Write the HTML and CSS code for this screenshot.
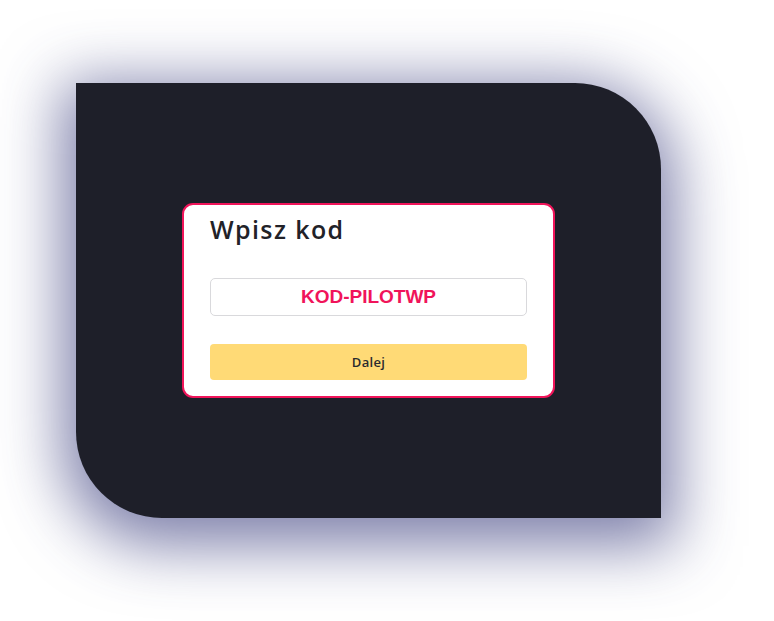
FILE: index.html
```html
<!DOCTYPE html>
<html lang="pl">
<head>
    <meta charset="UTF-8">
    <meta name="viewport" content="width=device-width, initial-scale=1.0">
    <title>Wpisz kod</title>
    <link rel="stylesheet" href="styles.css">
</head>
<body>
    <div class="stage">
        <div class="panel">
            <div class="code-card">
                <h1>Wpisz kod</h1>
                <input type="text" class="code-input" value="KOD-PILOTWP">
                <button class="next-btn">Dalej</button>
            </div>
        </div>
    </div>
</body>
</html>
```

FILE: styles.css
```css
body {
    margin: 0;
    background-color: #ffffff;
    font-family: "Open Sans", Arial, sans-serif;
}

.stage {
    padding: 83px 0 103px 76px;
}

.panel {
    width: 585px;
    height: 435px;
    background-color: #1e1f29;
    border-radius: 0 86px 0 86px;
    box-shadow: 0 14px 62px 14px rgba(48, 52, 120, 0.62);
    display: flex;
    align-items: center;
    justify-content: center;
}

.code-card {
    box-sizing: border-box;
    width: 373px;
    height: 195px;
    padding: 6px 26px 0 26px;
    background-color: white;
    border: 2px solid #f0145a;
    border-radius: 11px;
    display: flex;
    flex-direction: column;
}

h1 {
    margin: 0;
    font-size: 25px;
    font-weight: 600;
    line-height: 36px;
    letter-spacing: 1.4px;
    color: #222228;
}

.code-input {
    box-sizing: border-box;
    margin-top: 31px;
    width: 100%;
    height: 38px;
    border: 1px solid #d9d9dc;
    border-radius: 5px;
    font-family: "Liberation Sans", Arial, sans-serif;
    font-size: 19px;
    font-weight: bold;
    color: #f0145a;
    text-align: center;
    outline: none;
}

.next-btn {
    margin-top: 28px;
    width: 100%;
    height: 36px;
    border: none;
    border-radius: 4px;
    background-color: #ffda76;
    font-family: "Open Sans", Arial, sans-serif;
    font-size: 13px;
    font-weight: 600;
    letter-spacing: 0.3px;
    color: #2a2a2e;
    cursor: pointer;
}
```
